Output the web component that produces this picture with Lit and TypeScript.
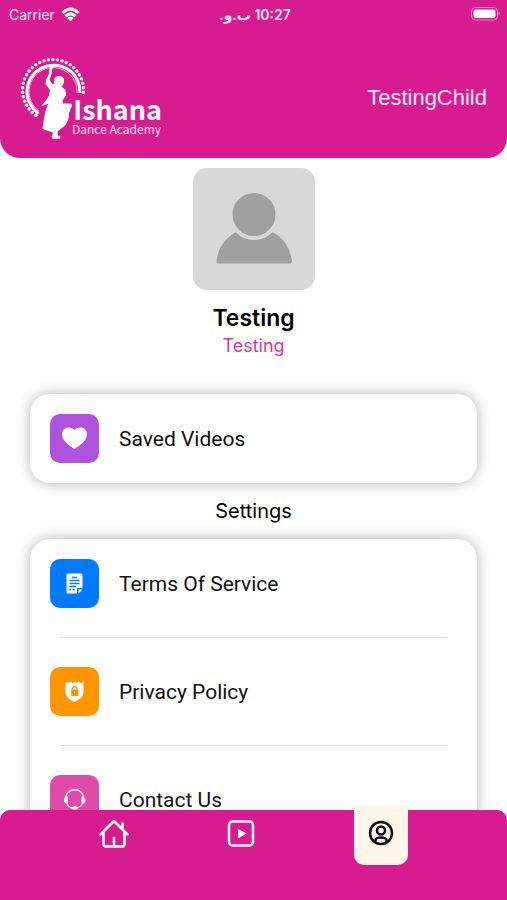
import { LitElement, html, css, svg } from "lit";
import { customElement } from "lit/decorators.js";

const teeth = Array.from({ length: 42 }, (_, i) => i)
  .map((i) => (i / 42) * 360)
  .filter((a) => a < 102 || a > 208);

const rad = (a: number) => ((a - 90) * Math.PI) / 180;

@customElement("academy-logo")
class AcademyLogo extends LitElement {
  static styles = css`
    :host { display: block; }
    .logo { display: block; width: 144px; height: 84px; fill: #fff; }
    .ring { fill: none; stroke: #fff; stroke-width: 3; }
    .inner { fill: none; stroke: #f3b5dc; stroke-width: 1; }
    .name { font: 700 27px "Noto Sans CJK SC", sans-serif; text-anchor: end; }
    .sub { font: 400 12px "Noto Sans CJK SC", "Noto Sans", sans-serif; fill: #fbe3f3; text-anchor: end; }
  `;
  render() {
    return html`<svg class="logo" viewBox="0 0 144 84" role="img" aria-label="Ishana Dance Academy">
      <path class="ring" d="M18.500 57.500A26.500 26.500 0 1 1 60 37" />
      <path class="inner" d="M19 55A24 24 0 1 1 57 37" />
      ${teeth.map((a) => svg`<circle r="1.7" cx=${33 + 30.5 * Math.cos(rad(a))} cy=${34 + 30.5 * Math.sin(rad(a))} />`)}
      <path d="M29.5 11.500 31.500 9.500 34 10.500 32 13.500 31.500 18 29.500 24 33 28.500 34.500 27.500C33 24 35 20 38.500 20C42 19.500 44.500 21.500 44 25.500C43.500 28.500 43 29.500 41.500 30.500L45.500 34 46 39.500 42.500 44.500 43 47.500 50 47.500C53 48 52.500 50 51 52L49 57C49 64 46.500 69 42 72L37.500 75.500 38 79.500 40.500 80.500 40 82.500 33 83 31.500 81 33 77 31 76C27 74.500 24 74 22.500 72.500C24 64 24.500 55 28.500 47.500L26 48.500 22 50 22 49 27 43 29 39.500 30 34 25.500 28 26 24 29 18Z" />
      <text class="name" x="142" y="64">Ishana</text>
      <text class="sub" x="141" y="78">Dance Academy</text>
    </svg>`;
  }
}

const heart = svg`<path fill="#fff" d="M24.500 35C20 32 12 27 12 20C12 16 15 13.500 18.500 13.500C21 13.500 23.500 14.500 24.500 16C25.500 14.500 28 13.500 30.500 13.500C34 13.500 37 16 37 20C37 27 29 32 24.500 35Z"/>`;
const doc = svg`<path fill="#fff" d="M17.500 14.500H31Q32.500 14.500 32.500 16V29H28Q27 29 27 30V34.500H17.500Q16.500 34.500 16.500 33.500V15.500Q16.500 14.500 17.500 14.500ZM28.500 34.500V30.500H32.500Z"/>
  <path stroke="#007aff" stroke-width="1.300" d="M22 18.500H27M19.500 21.500H29.500M19.500 24.500H29.500M19.500 27.500H26M19.500 30.500H21M22.500 30.500H24.500"/>`;
const shield = svg`<path fill="#fff" d="M15.500 15L18 16 20.500 14.500 22.500 16 24.500 15 26.500 16 28.500 14.500 31 16 33.500 15V25C33.500 30 29 33 24.500 35C20 33 15.500 30 15.500 25Z"/>
  <rect x="21" y="22.500" width="7.500" height="6.500" rx="1" fill="#ff9500"/><path fill="none" stroke="#ff9500" stroke-width="1.400" d="M22.500 23V21.500A2.300 2.300 0 0 1 27 21.500V23"/><circle cx="24.700" cy="25.500" r="0.700" fill="#fff"/>`;
const headset = svg`<path fill="none" stroke="#fff" stroke-width="1.300" d="M16 23C16 12 33.500 12 33.500 23M16.500 27C17.500 30.500 20 33 23 33"/>
  <path fill="#fff" d="M18 21.500V29C15.500 29 14 27.500 14 25.200S15.500 21.500 18 21.500ZM31.500 21.500V29C34 29 35.500 27.500 35.500 25.200S34 21.500 31.500 21.500Z"/><path fill="none" stroke="#fff" d="M33 28Q31.500 31.500 28 32.500"/><rect x="22" y="31.500" width="6" height="3" rx="1.500" fill="#fff"/>`;

@customElement("menu-row")
class MenuRow extends LitElement {
  static properties = { label: {}, icon: { attribute: false }, tone: {} };
  declare label: string;
  declare icon: unknown;
  declare tone: string;
  static styles = css`
    :host { display: block; }
    .row { display: flex; align-items: center; gap: 20px; width: 100%; padding: 20px; border: 0; background: none; color: #111; font: 400 21px/24px Roboto, sans-serif; text-align: left; cursor: pointer; }
    .tile { flex: none; width: 49px; height: 49px; border-radius: 10px; }
    .purple { background: #af52de; }
    .blue { background: #007aff; }
    .orange { background: #ff9500; }
    .pink { background: #e04ba9; }
  `;
  render() {
    return html`<button class="row"><svg class="tile ${this.tone}" viewBox="0 0 49 49" aria-hidden="true">${this.icon}</svg><span>${this.label}</span></button>`;
  }
}

@customElement("app-root")
class AppRoot extends LitElement {
  static styles = css`
    :host { display: flex; flex-direction: column; height: 100vh; background: #fff; font-family: Inter, sans-serif; color: #000; }
    .header { flex: none; background: #d61c8e; color: #fff; border-radius: 0 0 20px 20px; padding-bottom: 18px; }
    .status { display: grid; grid-template-columns: 1fr auto 1fr; align-items: center; height: 28px; padding: 0 6px 0 9px; font-size: 14px; color: #fde6f4; }
    .carrier { display: flex; align-items: center; gap: 6px; }
    .wifi { width: 19px; height: 15px; fill: none; stroke: #fff; stroke-width: 3; }
    .time { font-weight: 600; font-family: Inter, "DejaVu Sans", sans-serif; }
    .battery { justify-self: end; width: 31px; height: 14px; }
    .brand { display: flex; align-items: center; justify-content: space-between; padding: 28px 20px 0; }
    .child { font: 400 22px/26px "Liberation Sans", sans-serif; color: #fde6f4; }
    .main { flex: 1; min-height: 0; overflow: auto; scrollbar-width: none; padding: 10px 30px 30px; }
    .profile { display: flex; flex-direction: column; align-items: center; }
    .avatar { width: 122px; height: 122px; border-radius: 14px; background: #d8d8d8; }
    .title { margin: 14px 0 0; font-size: 23px; line-height: 28px; font-weight: 600; }
    .subtitle { margin: 0; font-size: 18px; line-height: 28px; color: #d935a0; }
    .card { background: #fff; border-radius: 20px; box-shadow: 0 0 14px rgba(0, 0, 0, 0.3); }
    .saved { margin-top: 34px; }
    .heading { margin: 0; padding: 14px 0; text-align: center; font-size: 20px; line-height: 28px; font-weight: 400; }
    .item + .item { padding-top: 18px; }
    .item + .item::before { content: ""; display: block; height: 1px; margin: -9px 30px 9px; background: #e8e8e8; }
    .nav { flex: none; display: flex; justify-content: space-evenly; align-items: start; height: 90px; box-sizing: border-box; background: #d61c8e; border-radius: 10px 10px 0 0; z-index: 1; }
    .tab { display: flex; justify-content: center; align-items: start; width: 28px; height: 48px; padding: 8px 0 0; border: 0; background: none; color: #fff; cursor: pointer; }
    .tab svg { flex: none; width: 32px; height: 32px; fill: none; stroke: currentColor; stroke-width: 2.5; stroke-linejoin: round; stroke-linecap: round; }
    .tab.active { width: 54px; height: 60px; margin-top: -5px; padding-top: 12px; background: #fff7ec; color: #111; border-radius: 0 0 10px 10px; }
  `;
  render() {
    return html`
      <header class="header">
        <div class="status">
          <span class="carrier">Carrier
            <svg class="wifi" viewBox="0 0 19 15" aria-hidden="true"><path d="M1.500 6Q9.500-2 17.500 6M4.500 9.300Q9.500 4.500 14.500 9.300"/><path fill="#fff" stroke="none" d="M6.300 11Q9.500 8.500 12.700 11L9.500 14.500Z"/></svg>
          </span>
          <span class="time" dir="rtl">10:27 ب.و.</span>
          <svg class="battery" viewBox="0 0 31 14" aria-hidden="true"><rect x="1.500" y="0.500" width="26" height="12.500" rx="4" fill="none" stroke="#ec83c5"/><rect x="3.500" y="2.500" width="22" height="8.500" rx="2" fill="#fff"/><path fill="#ec83c5" d="M28.500 4.500Q31 6.500 28.500 8.500Z"/></svg>
        </div>
        <div class="brand"><academy-logo></academy-logo><span class="child">TestingChild</span></div>
      </header>
      <main class="main">
        <section class="profile">
          <svg class="avatar" viewBox="0 0 122 122" role="img" aria-label="Profile picture"><path fill="#a0a0a0" d="M43 64Q60.500 77 79 64C91 70 97 80 99 93Q99 95.500 97 95.500H26Q23.500 95.500 23.500 93C25 80 32 70 43 64Z"/><circle cx="61" cy="46.500" r="23.500" fill="#a0a0a0" stroke="#d8d8d8" stroke-width="4"/></svg>
          <h1 class="title">Testing</h1>
          <p class="subtitle">Testing</p>
        </section>
        <section class="card saved"><menu-row label="Saved Videos" tone="purple" .icon=${heart}></menu-row></section>
        <h2 class="heading">Settings</h2>
        <section class="card">
          <div class="item"><menu-row label="Terms Of Service" tone="blue" .icon=${doc}></menu-row></div>
          <div class="item"><menu-row label="Privacy Policy" tone="orange" .icon=${shield}></menu-row></div>
          <div class="item"><menu-row label="Contact Us" tone="pink" .icon=${headset}></menu-row></div>
        </section>
      </main>
      <nav class="nav" aria-label="Main">
        <button class="tab" aria-label="Home"><svg viewBox="0 0 32 32"><path d="M3.500 16.500 17 3 30.500 16.500M6.500 14.500V26Q6.500 28.500 9 28.500H25Q27.500 28.500 27.500 26V14.500M17 28.500V20M25.500 5.500V11"/></svg></button>
        <button class="tab" aria-label="Videos"><svg viewBox="0 0 32 32"><rect x="4" y="3.500" width="24" height="24" rx="3.500"/><path fill="currentColor" stroke="none" d="M13 11 21.500 15.500 13 20.500Z"/></svg></button>
        <button class="tab active" aria-label="Profile"><svg viewBox="0 0 32 32"><circle cx="16" cy="16" r="11"/><circle cx="16" cy="13.500" r="4"/><path d="M10.500 25V23Q11 20.500 16 20.500T21.500 23V25"/></svg></button>
      </nav>
    `;
  }
}
